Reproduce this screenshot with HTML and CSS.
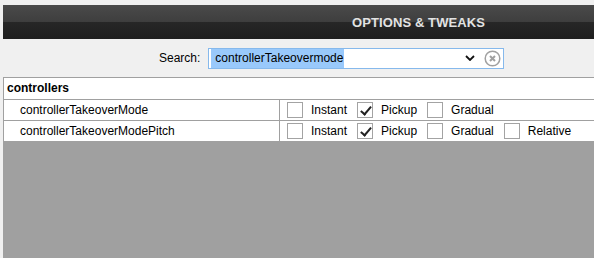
FILE: index.html
```html
<!DOCTYPE html>
<html lang="en">
<head>
    <meta charset="UTF-8">
    <title>Options &amp; Tweaks</title>
    <link rel="stylesheet" href="styles.css">
</head>
<body>
    <header class="title-bar">
        <h1>OPTIONS &amp; TWEAKS</h1>
    </header>

    <div class="search-row">
        <label class="search-label">Search:</label>
        <div class="search-box">
            <span class="search-text"><span class="selected">controllerTakeovermode</span></span>
            <svg class="chevron" width="10" height="6" viewBox="0 0 10 6">
                <path d="M1 1 L5 5 L9 1" fill="none" stroke="#111" stroke-width="1.8"/>
            </svg>
            <svg class="clear" width="17" height="17" viewBox="0 0 17 17">
                <circle cx="8.5" cy="8.5" r="7.3" fill="none" stroke="#a0a0a0" stroke-width="1.5"/>
                <path d="M6 6 L11 11 M11 6 L6 11" stroke="#a0a0a0" stroke-width="2"/>
            </svg>
        </div>
    </div>

    <main class="panel">
        <div class="options">
            <div class="group">controllers</div>

            <div class="name">controllerTakeoverMode</div>
            <div class="choices">
                <span class="opt"><span class="box"></span>Instant</span>
                <span class="opt"><span class="box checked"></span>Pickup</span>
                <span class="opt"><span class="box"></span>Gradual</span>
            </div>

            <div class="name">controllerTakeoverModePitch</div>
            <div class="choices">
                <span class="opt"><span class="box"></span>Instant</span>
                <span class="opt"><span class="box checked"></span>Pickup</span>
                <span class="opt"><span class="box"></span>Gradual</span>
                <span class="opt"><span class="box"></span>Relative</span>
            </div>
        </div>
    </main>
</body>
</html>
```

FILE: styles.css
```css
* {
    margin: 0;
    padding: 0;
    box-sizing: border-box;
}

html,
body {
    height: 100%;
}

body {
    font-family: "Liberation Sans", Arial, sans-serif;
    font-size: 12px;
    color: #000;
    background-color: #f0f0f0;
    padding: 5px 0 0 3px;
    display: flex;
    flex-direction: column;
}

.title-bar {
    height: 34px;
    background: linear-gradient(to bottom, #4a4a4a 0, #3e3e3e 17px, #272727 17px, #1e1e1e 100%);
    display: flex;
    align-items: center;
    padding-left: 349px;
}

.title-bar h1 {
    font-size: 13px;
    font-weight: 700;
    color: #e2e2e2;
    letter-spacing: 0.1px;
}

.search-row {
    display: flex;
    gap: 8px;
    padding: 9px 0 0 156px;
    height: 38px;
    align-items: flex-start;
}

.search-label {
    line-height: 21px;
}

.search-box {
    width: 296px;
    height: 21px;
    background-color: #fff;
    border: 1px solid #86b9ec;
    display: flex;
    align-items: center;
    padding: 0 2px 0 2px;
}

.search-text {
    flex: 1;
    height: 100%;
    display: flex;
}

.selected {
    background-color: #99c9fb;
    padding: 0 1px 0 4px;
    line-height: 19px;
}

.chevron {
    margin-right: 9px;
    margin-top: -1px;
}

.panel {
    flex: 1;
    background-color: #a0a0a0;
    padding: 1px 0 0 1px;
}

.options {
    display: grid;
    grid-template-columns: 275px 1fr;
    gap: 1px;
}

.group {
    grid-column: 1 / 3;
    background-color: #fff;
    font-weight: 700;
    height: 21px;
    line-height: 21px;
    padding-left: 3px;
}

.name {
    background-color: #fff;
    height: 20px;
    line-height: 20px;
    padding-left: 16px;
}

.choices {
    background-color: #fff;
    height: 20px;
    display: flex;
    align-items: center;
    padding-left: 7px;
}

.opt {
    display: flex;
    align-items: center;
    margin-right: 10px;
}

.box {
    width: 16px;
    height: 16px;
    border: 1px solid #a3a3a3;
    background-color: #fff;
    margin-right: 8px;
    position: relative;
}

.box.checked::after {
    content: "";
    position: absolute;
    left: 5px;
    top: 1px;
    width: 4px;
    height: 9px;
    border-right: 2px solid #222;
    border-bottom: 2px solid #222;
    transform: rotate(40deg);
}
```
